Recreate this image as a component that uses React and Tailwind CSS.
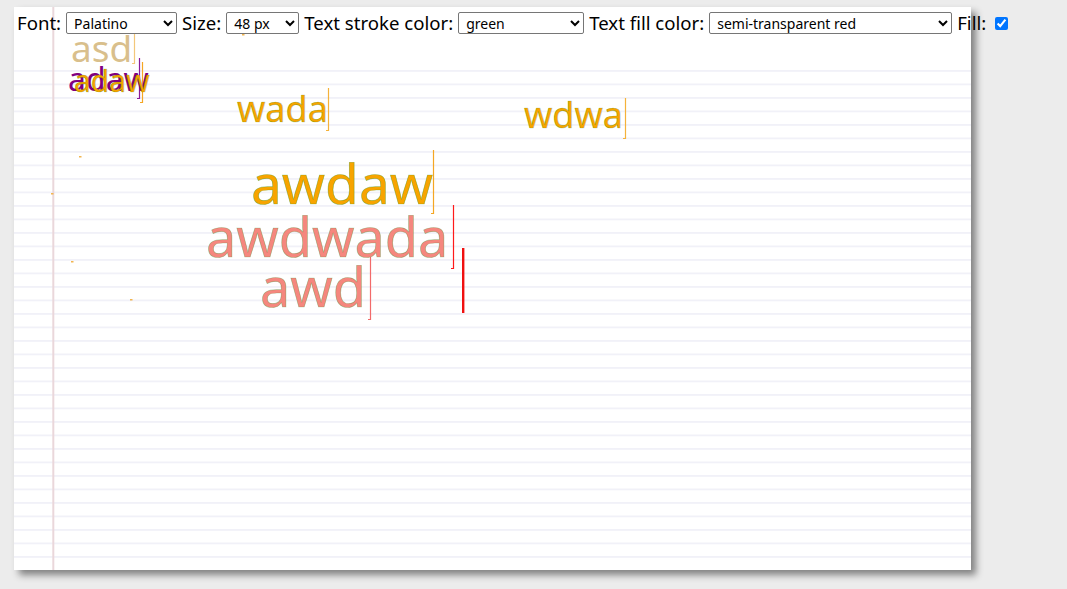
import React from 'react';

const ruled = Array.from({ length: 37 }, (_, i) => 63 + i * 13.5);

const words = [
    { text: 'asd', cls: 'left-[57px] top-[22px] text-[37px] text-[#d9bf8c]' },
    { text: 'adaw', cls: 'left-[54px] top-[56px] text-[32px] text-[#800080]' },
    { text: 'adaw', cls: 'left-[60px] top-[59px] text-[30px] text-[#f7a400] [-webkit-text-stroke:0.6px_rgba(0,128,0,0.35)]' },
    { text: 'wada', cls: 'left-[223px] top-[84px] text-[36px] text-[#f7a400] [-webkit-text-stroke:0.6px_rgba(0,128,0,0.35)]' },
    { text: 'wdwa', cls: 'left-[510px] top-[90px] text-[36px] text-[#f7a400] [-webkit-text-stroke:0.6px_rgba(0,128,0,0.35)]' },
    { text: 'awdaw', cls: 'left-[237px] top-[148px] text-[55px] text-[#f7a400] [-webkit-text-stroke:0.7px_rgba(0,128,0,0.35)]' },
    { text: 'awdwada', cls: 'left-[192px] top-[202px] text-[54px] text-[#f5877e] [-webkit-text-stroke:0.7px_rgba(0,128,0,0.3)]' },
    { text: 'awd', cls: 'left-[246px] top-[252px] text-[54px] text-[#f5877e] [-webkit-text-stroke:0.7px_rgba(0,128,0,0.3)]' },
];

// caret marks left on the canvas: x, top, bottom, colour
const carets = [
    [120, 26, 56, '#f3c77a'],
    [125, 51, 91, '#8a1a9a'],
    [128, 55, 95, '#f5a623'],
    [314, 81, 123, '#f5b23a'],
    [611, 91, 131, '#f5b23a'],
    [419, 143, 206, '#f5a623'],
    [439, 198, 261, '#ff1a1a'],
    [356, 250, 312, '#f26a6a'],
];

const specks = [[65, 149], [37, 186], [57, 254], [116, 292], [228, 27]];

const Select = ({ value, w }) => (
    <select
        defaultValue={value}
        className={`${w} h-[22px] border border-[#767676] rounded-[2px] bg-white pl-[3px] text-[14px] leading-[18px] text-black font-['Noto_Sans',sans-serif]`}
    >
        <option>{value}</option>
    </select>
);

const App = () => {
    return (
        <div className="relative min-h-[589px] w-[1067px] bg-[#ececec] pt-[7px] pl-[14px] font-['Noto_Sans',sans-serif]">
            {/* Paper canvas */}
            <div className="relative w-[957px] h-[563px] bg-white overflow-hidden shadow-[5px_5px_7px_rgba(0,0,0,0.45)]">
                <svg className="absolute inset-0" width="957" height="563">
                    {ruled.map((y) => (
                        <rect key={y} x="0" y={y} width="957" height="1.8" fill="#f1f1f8" />
                    ))}
                    <rect x="38.3" y="0" width="2" height="563" fill="#ead7db" />
                    {specks.map(([x, y]) => (
                        <rect key={x} x={x} y={y} width="2.5" height="1.5" fill="#f2b550" />
                    ))}
                    {carets.map(([x, t, b, c]) => (
                        <path key={x} d={`M${x + 0.5} ${t} V${b + 0.5} H${x - 2}`} stroke={c} strokeWidth="1.2" fill="none" />
                    ))}
                    <rect x="448" y="241" width="2.4" height="65" fill="#f01010" />
                </svg>

                {words.map((w, i) => (
                    <span
                        key={i}
                        className={`absolute leading-none whitespace-nowrap font-['Noto_Sans',sans-serif] ${w.cls}`}
                    >
                        {w.text}
                    </span>
                ))}
            </div>

            {/* Toolbar over the canvas */}
            <div className="absolute left-[17px] top-[12px] flex items-center gap-[5px] text-[18.6px] leading-[22px] text-black">
                <span>Font:</span>
                <Select value="Palatino" w="w-[111px]" />
                <span>Size:</span>
                <Select value="48 px" w="w-[73px]" />
                <span>Text stroke color:</span>
                <Select value="green" w="w-[126px]" />
                <span>Text fill color:</span>
                <Select value="semi-transparent red" w="w-[243px]" />
                <span>Fill:</span>
                <input type="checkbox" defaultChecked className="ml-[4px] w-[13px] h-[13px] accent-[#0075ff]" />
            </div>
        </div>
    );
};

export default App;
